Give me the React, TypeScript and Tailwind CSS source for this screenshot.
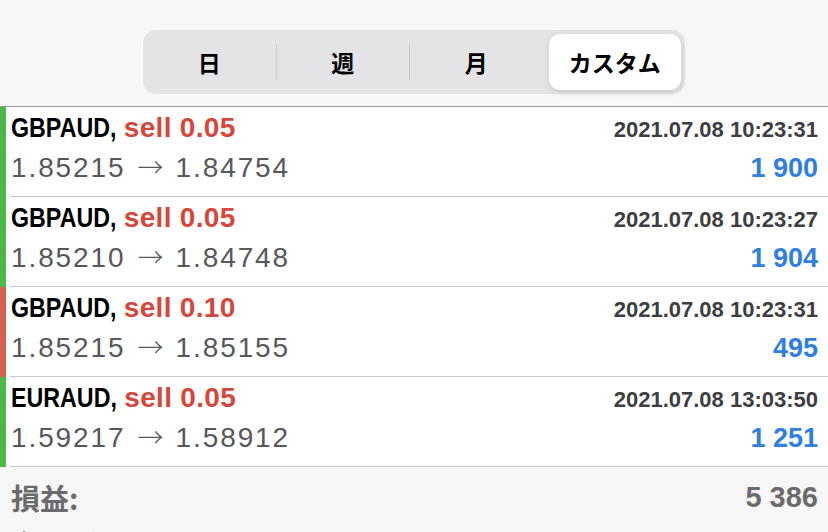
import React from "react";

type Row = {
  sym: string;
  side: string;
  open: string;
  close: string;
  time: string;
  profit: string;
  bar: string;
};

const rows: Row[] = [
  { sym: "GBPAUD,", side: "sell 0.05", open: "1.85215", close: "1.84754", time: "2021.07.08 10:23:31", profit: "1 900", bar: "bg-[#4cb848]" },
  { sym: "GBPAUD,", side: "sell 0.05", open: "1.85210", close: "1.84748", time: "2021.07.08 10:23:27", profit: "1 904", bar: "bg-[#4cb848]" },
  { sym: "GBPAUD,", side: "sell 0.10", open: "1.85215", close: "1.85155", time: "2021.07.08 10:23:31", profit: "495", bar: "bg-[#d6604f]" },
  { sym: "EURAUD,", side: "sell 0.05", open: "1.59217", close: "1.58912", time: "2021.07.08 13:03:50", profit: "1 251", bar: "bg-[#4cb848]" },
];

const sans = "font-['Liberation_Sans',Arial,sans-serif]";
const cjk = "font-['Noto_Sans_CJK_JP',sans-serif]";

export default function App() {
  return (
    <div className="w-[828px] h-[532px] overflow-hidden bg-[#f7f7f7]">
      {/* header */}
      <div className="h-[107px] pt-[30px] flex justify-center items-start border-b border-[#9a9a9a]">
        <div className={`w-[542px] h-[64px] rounded-[13px] bg-[#e4e4e6] flex items-center ${cjk}`}>
          <div className="flex-1 h-full flex items-center justify-center text-[23px] font-bold text-black">日</div>
          <div className="w-px h-[36px] bg-[#cdcdcf]" />
          <div className="flex-1 h-full flex items-center justify-center text-[23px] font-bold text-black">週</div>
          <div className="w-px h-[36px] bg-[#cdcdcf]" />
          <div className="flex-1 h-full flex items-center justify-center text-[23px] font-bold text-black">月</div>
          <div className="flex-1 h-full py-[4px] pl-[6px] pr-[4px]">
            <div className="h-full rounded-[11px] bg-white shadow-[0_2px_6px_rgba(0,0,0,0.12)] flex items-center justify-center text-[23px] font-bold text-black">
              カスタム
            </div>
          </div>
        </div>
      </div>

      {/* rows */}
      <div className="bg-white">
        {rows.map((r, i) => (
          <div key={i} className="flex h-[90px]">
            <div className={`w-[6px] ${r.bar}`} />
            <div className="flex-1 ml-[4px] border-b border-[#c8c8c8] pl-[1px] pr-[10px] flex flex-col">
              <div className="flex items-baseline justify-between h-[40px] pt-[4px]">
                <div className={`${sans} font-bold text-[28px] leading-[34px] whitespace-nowrap`}>
                  <span className="inline-block text-black origin-left scale-x-[0.83] mr-[-22px]">{r.sym}</span>{" "}
                  <span className="text-[#d5473a] tracking-[0.3px]">{r.side}</span>
                </div>
                <div className={`${sans} font-bold text-[22px] text-[#3e3e42]`}>{r.time}</div>
              </div>
              <div className="flex items-baseline justify-between mt-[1px]">
                <div className={`${sans} text-[28px] leading-[34px] text-[#58585c] whitespace-nowrap`}>
                  <span className="tracking-[1.9px]">{r.open}</span>
                  <span className="font-['Noto_Sans_CJK_JP',sans-serif] font-light text-[26px] mx-[12px]">→</span>
                  <span className="tracking-[1.9px]">{r.close}</span>
                </div>
                <div className={`${sans} font-bold text-[27px] text-[#2f7fe3]`}>{r.profit}</div>
              </div>
            </div>
          </div>
        ))}
      </div>

      {/* summary */}
      <div className="pl-[11px] pr-[10px] pt-[10px]">
        <div className="flex items-center justify-between h-[42px]">
          <div className={`${cjk} font-bold text-[29px] text-[#6b6b6d]`}>損益:</div>
          <div className={`${sans} font-bold text-[29px] text-[#6b6b6d]`}>5 386</div>
        </div>
        <div className="flex items-center justify-between h-[42px] mt-[4px]">
          <div className={`${cjk} font-bold text-[29px] text-[#6b6b6d]`}>クレジット:</div>
          <div className={`${sans} font-bold text-[29px] text-[#6b6b6d]`}>0</div>
        </div>
      </div>
    </div>
  );
}
